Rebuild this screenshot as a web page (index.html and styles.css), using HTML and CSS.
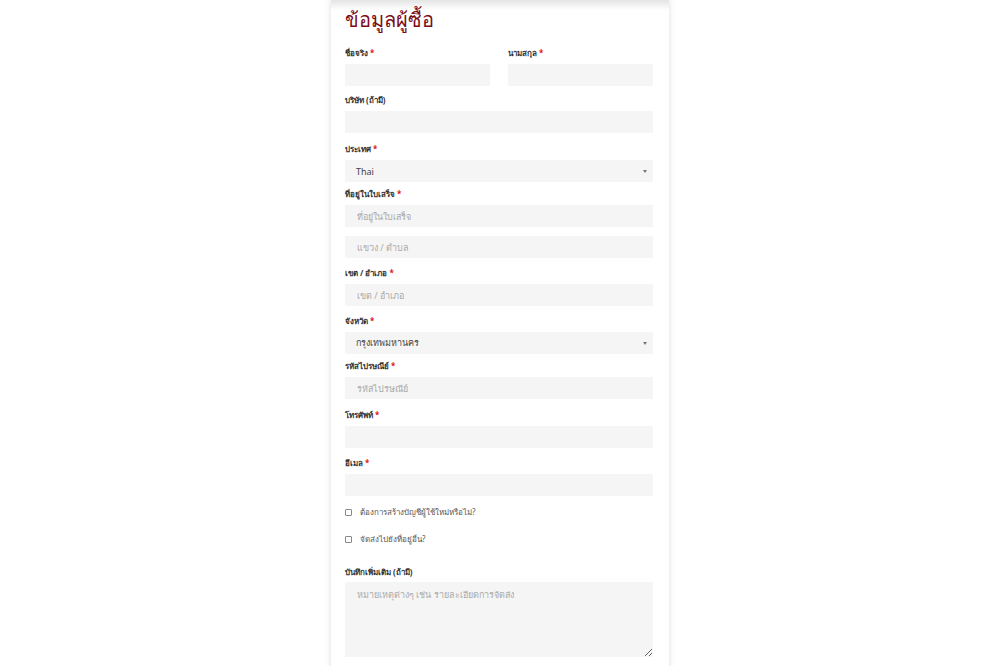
FILE: index.html
```html
<!DOCTYPE html>
<html lang="th">
<head>
  <meta charset="UTF-8">
  <meta name="viewport" content="width=device-width, initial-scale=1">
  <title>ข้อมูลผู้ซื้อ</title>
  <link rel="stylesheet" href="styles.css">
</head>
<body>
  <div class="card">
    <h3 class="title">ข้อมูลผู้ซื้อ</h3>

    <div class="row">
      <div class="field">
        <label>ชื่อจริง <span class="req">*</span></label>
        <input type="text">
      </div>
      <div class="field">
        <label>นามสกุล <span class="req">*</span></label>
        <input type="text">
      </div>
    </div>

    <div class="field wide">
      <label>บริษัท (ถ้ามี)</label>
      <input type="text">
    </div>

    <div class="field tight">
      <label>ประเทศ <span class="req">*</span></label>
      <div class="select">Thai</div>
    </div>

    <div class="field">
      <label>ที่อยู่ในใบเสร็จ <span class="req">*</span></label>
      <input type="text" placeholder="ที่อยู่ในใบเสร็จ">
    </div>
    <div class="field">
      <input type="text" placeholder="แขวง / ตำบล">
    </div>

    <div class="field">
      <label>เขต / อำเภอ <span class="req">*</span></label>
      <input type="text" placeholder="เขต / อำเภอ">
    </div>

    <div class="field tight">
      <label>จังหวัด <span class="req">*</span></label>
      <div class="select">กรุงเทพมหานคร</div>
    </div>

    <div class="field wide">
      <label>รหัสไปรษณีย์ <span class="req">*</span></label>
      <input type="text" placeholder="รหัสไปรษณีย์">
    </div>

    <div class="field">
      <label>โทรศัพท์ <span class="req">*</span></label>
      <input type="text">
    </div>

    <div class="field">
      <label>อีเมล <span class="req">*</span></label>
      <input type="text">
    </div>

    <label class="check"><span class="box"></span>ต้องการสร้างบัญชีผู้ใช้ใหม่หรือไม่?</label>
    <label class="check"><span class="box"></span>จัดส่งไปยังที่อยู่อื่น?</label>

    <div class="field notes">
      <label>บันทึกเพิ่มเติม (ถ้ามี)</label>
      <textarea placeholder="หมายเหตุต่างๆ เช่น รายละเอียดการจัดส่ง"></textarea>
    </div>
  </div>
</body>
</html>
```

FILE: styles.css
```css
html, body {
  margin: 0; padding: 0;
  background: #fff;
  font-family: "Noto Sans", "DejaVu Sans", sans-serif;
  color: #333;
  overflow: hidden;
}

.card {
  width: 308px;
  margin: 0 auto;
  padding: 0 16px 40px 14px;
  background: linear-gradient(#e4e4e4, #fff 10px);
  box-shadow: 0 0 6px rgba(0,0,0,0.14);
  min-height: 700px;
}

.title {
  margin: 0;
  padding: 6px 0 13px;
  font-size: 20px;
  line-height: 28px;
  font-weight: 500;
  color: #7b0d18;
}

.row { display: flex; gap: 18px; margin-bottom: 8px; }
.row .field { flex: 1; margin-bottom: 0; }

.field { margin-bottom: 9px; }
.field.wide { margin-bottom: 10px; }
.field.tight { margin-bottom: 6px; }
.field label {
  display: block;
  font-size: 8px;
  line-height: 12px;
  font-weight: bold;
  color: #333;
  margin-bottom: 5px;
}
.req { color: #e01010; }

.field input, .select, .field textarea {
  display: block;
  box-sizing: border-box;
  width: 100%;
  height: 22px;
  border: 0;
  margin: 0;
  padding: 0 12px;
  background: #f5f5f5;
  font-family: inherit;
  font-size: 9px;
  color: #444;
  outline: none;
}
.field input::placeholder, .field textarea::placeholder { color: #aaa; }

.select {
  display: flex;
  align-items: center;
  justify-content: space-between;
  padding-left: 11px;
  padding-right: 6px;
}
.select::after {
  content: "";
  border-left: 2.5px solid transparent;
  border-right: 2.5px solid transparent;
  border-top: 3px solid #777;
}

.check {
  display: flex;
  align-items: center;
  font-size: 8px;
  line-height: 12px;
  color: #555;
  margin: 10px 0 15px;
}
.check .box {
  width: 5px; height: 5px;
  border: 1px solid #888;
  border-radius: 1px;
  margin-right: 8px;
}
.check + .check { margin-top: 0; }

.notes { margin-top: 21px; }
.notes label { margin-bottom: 4px; }
.field textarea {
  height: 75px;
  padding: 6px 12px;
  resize: both;
}
```
